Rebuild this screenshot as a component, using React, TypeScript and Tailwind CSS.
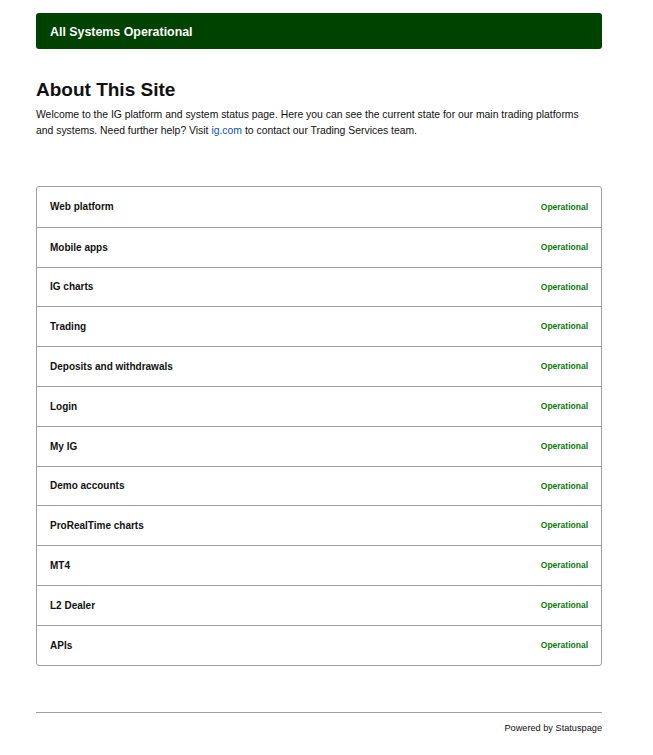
const components = [
  "Web platform",
  "Mobile apps",
  "IG charts",
  "Trading",
  "Deposits and withdrawals",
  "Login",
  "My IG",
  "Demo accounts",
  "ProRealTime charts",
  "MT4",
  "L2 Dealer",
  "APIs",
];

export default function App() {
  return (
    <div
      className="min-h-screen bg-white text-[#111]"
      style={{ fontFamily: '"Liberation Sans", Arial, sans-serif' }}
    >
      <div className="w-[566px] ml-[36px] pt-[13px] pb-4">
        <div className="h-[36px] flex items-center pt-[3px] px-[14px] bg-[#004200] rounded-[3px]">
          <span className="text-white text-[12.4px] font-bold">All Systems Operational</span>
        </div>

        <h2 className="mt-[29px] text-[19px] font-bold leading-[24px] text-[#111]">About This Site</h2>
        <p className="mt-[5px] max-w-[552px] text-[10.4px] leading-[16px] text-[#111]">
          Welcome to the IG platform and system status page. Here you can see the current state for our main trading platforms and systems. Need further help? Visit{" "}
          <a className="text-[#0a52c4]" href="#">ig.com</a> to contact our Trading Services team.
        </p>

        <div className="mt-[47px] border border-[#a0a0a0] rounded-[3px]">
          {components.map((name, i) => (
            <div
              key={name}
              className={
                "h-[39.8px] flex items-center justify-between px-[13px] " +
                (i > 0 ? "border-t border-[#a0a0a0]" : "")
              }
            >
              <span className="text-[10px] font-bold">{name}</span>
              <span className="text-[8.5px] font-bold text-[#0a7a0a]">Operational</span>
            </div>
          ))}
        </div>

        <div className="mt-[46px] border-t border-[#a0a0a0] pt-[9px] flex justify-end">
          <span className="text-[9.2px] text-[#111]">Powered by Statuspage</span>
        </div>
      </div>
    </div>
  );
}
